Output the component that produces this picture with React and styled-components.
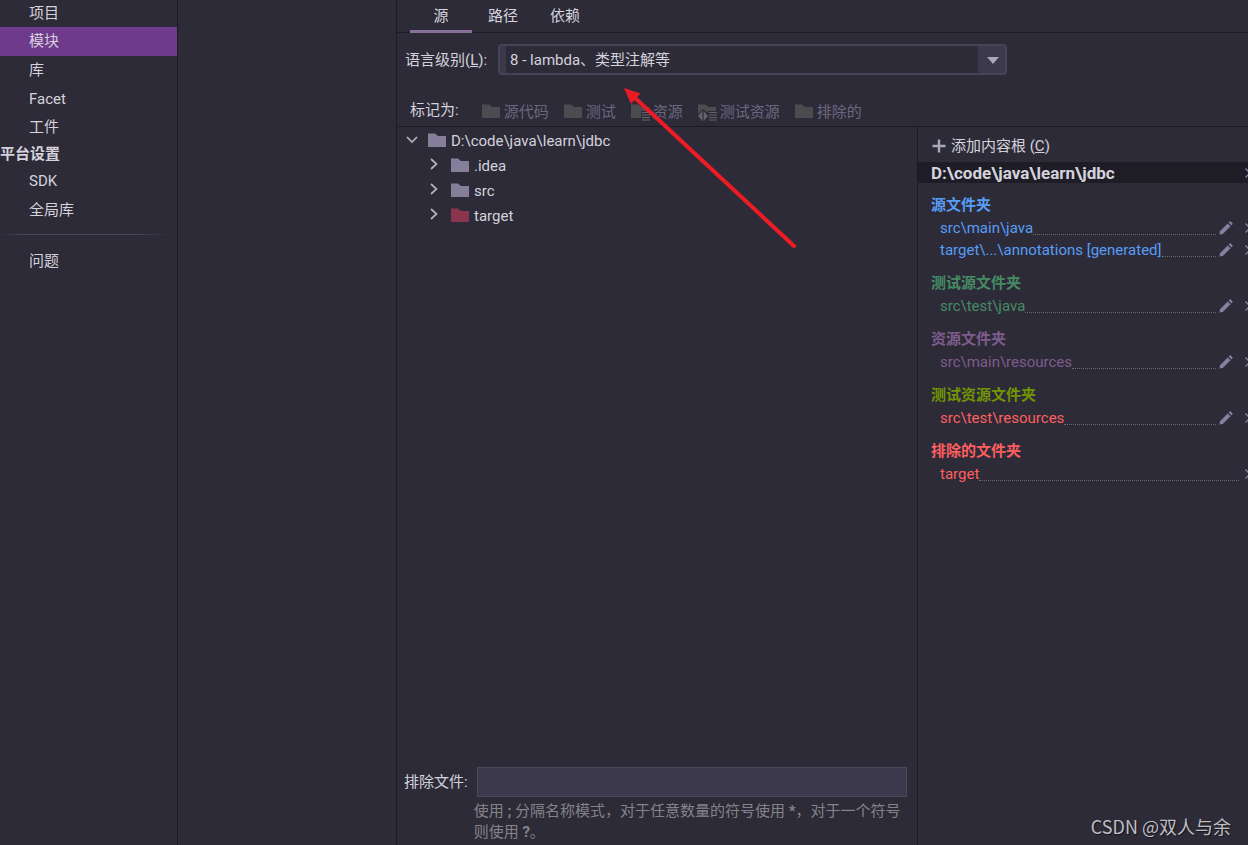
import React from 'react';
import styled, { createGlobalStyle } from 'styled-components';

const GlobalStyle = createGlobalStyle`
    * {
        box-sizing: border-box;
    }

    body {
        margin: 0;
        background: #2d2b38;
        color: #d4d2dc;
        font-family: Roboto, "Noto Sans CJK SC", sans-serif;
        font-size: 15px;
        line-height: 20px;
        overflow: hidden;
    }

    button, input, select {
        font: inherit;
        color: inherit;
    }

    ul {
        margin: 0;
        padding: 0;
        list-style: none;
    }
`
const Window = styled.div`
    display: flex;
    height: 100vh;
    position: relative;
    overflow: hidden;
`
const Sidebar = styled.nav`
    flex: 0 0 178px;
    border-right: 1px solid #1c1a24;
`
const NavItem = styled.button`
    display: block;
    width: 100%;
    height: ${({ short }) => short ? "27px" : "29px"};
    padding: 0 0 1px 29px;
    border: 0;
    text-align: left;
    white-space: nowrap;
    cursor: pointer;
    background: ${({ active }) => active ? "#703a8c" : "transparent"};
`
const NavList = styled.ul`
    li:first-child ${NavItem} {
        height: 27px;
        padding-bottom: 2px;
    }
`
const NavTitle = styled.h2`
    margin: 0;
    font-size: 15px;
    line-height: 26px;
    font-weight: 700;
`
const NavDivider = styled.hr`
    height: 1px;
    margin: 9px 8px 12px 0;
    border: 0;
    background: linear-gradient(to right, #2d2b38, #484658 15%, #484658 82%, #2d2b38);
`
const ModuleList = styled.div`
    flex: 0 0 219px;
    border-right: 1px solid #1c1a24;
`
const Main = styled.main`
    flex: 1;
    min-width: 0;
    display: flex;
    flex-direction: column;
`
const Tabs = styled.div`
    display: flex;
    height: 33px;
    padding-left: 13px;
    border-bottom: 1px solid #1c1a24;
`
const Tab = styled.button`
    width: 62px;
    height: 33px;
    padding: 1px 0 0;
    border: 0;
    border-bottom: 3px solid ${({ active }) => active ? "#877099" : "transparent"};
    background: none;
    cursor: pointer;
`
const LevelRow = styled.div`
    display: flex;
    align-items: center;
    gap: 11px;
    padding: 11px 8px 0;
`
const SelectBox = styled.div`
    position: relative;
    width: 509px;
`
const Select = styled.select`
    display: block;
    width: 100%;
    height: 31px;
    padding: 1px 32px 0 10px;
    border: 2px solid #454358;
    border-radius: 4px;
    appearance: none;
    background: linear-gradient(to right, #3b394b 6px, #2d2b38 6px, #2d2b38 calc(100% - 27px), #3b394b calc(100% - 27px));
`
const Caret = styled.svg`
    position: absolute;
    right: 8px;
    top: 13px;
    pointer-events: none;
`
const MarkRow = styled.div`
    display: flex;
    align-items: center;
    height: 52px;
    padding: 22px 0 0 13px;
    border-bottom: 1px solid #1c1a24;
`
const MarkLabel = styled.span`
    margin-right: 23px;
    padding-bottom: 4px;
`
const MarkButton = styled.button`
    display: flex;
    align-items: center;
    gap: ${({ tight }) => tight ? "2px" : "4px"};
    margin-right: 15px;
    padding: 0;
    border: 0;
    background: none;
    white-space: nowrap;

    &:disabled {
        color: #6b6780;
    }
`
const Content = styled.div`
    flex: 1;
    min-height: 0;
    display: flex;
`
const TreePane = styled.section`
    flex: 1;
    min-width: 0;
    display: flex;
    flex-direction: column;
`
const Tree = styled.ul`
    flex: 1;
    padding: 1px 0 0 8px;
`
const TreeItem = styled.li`
    display: flex;
    align-items: center;
    height: 25px;
    padding-left: ${({ level }) => level ? "22px" : "0"};
`
const Toggle = styled.button`
    display: flex;
    width: 14px;
    margin-right: ${({ level }) => level ? "10px" : "9px"};
    padding: 0 0 3px;
    border: 0;
    background: none;
`
const TreeName = styled.span`
    margin-left: 5px;
`
const ExcludeForm = styled.div`
    display: grid;
    grid-template-columns: max-content 1fr;
    column-gap: 9px;
    align-items: center;
    padding: 0 10px 2px 7px;
`
const ExcludeInput = styled.input`
    width: 100%;
    height: 30px;
    border: 1px solid #4a485c;
    background: #3b394b;
`
const Hint = styled.p`
    grid-column: 2;
    margin: 4px 0 0 -3px;
    color: #85838a;
    line-height: 21px;
`
const RootsPane = styled.aside`
    flex: 0 0 331px;
    min-width: 0;
    border-left: 1px solid #1c1a24;
    overflow: hidden;
`
const AddRoot = styled.button`
    display: flex;
    align-items: center;
    gap: 5px;
    height: 35px;
    padding: 2px 0 0 14px;
    border: 0;
    background: none;
    white-space: nowrap;
`
const RootTitle = styled.div`
    display: flex;
    align-items: center;
    justify-content: space-between;
    height: 21px;
    padding-left: 13px;
    background: #1e1d26;
    font-weight: 700;
    font-size: 17px;
`
const Group = styled.section`
    padding: 10px 0 0 13px;
    color: ${({ color }) => color};
`
const GroupTitle = styled.h3`
    margin: 0;
    font-size: 15px;
    line-height: 24px;
    font-weight: 700;
`
const Folder = styled.li`
    display: flex;
    align-items: center;
    height: 22px;
    padding-left: 9px;
    white-space: nowrap;
    color: ${({ color }) => color};
`
const Dots = styled.span`
    flex: 1;
    height: 13px;
    margin-right: 3px;
    border-bottom: 1px dotted #6d6b70;
`
const IconButton = styled.button`
    display: flex;
    padding: 0;
    border: 0;
    background: none;
`
const RemoveButton = styled(IconButton)`
    flex: 0 0 auto;
    margin: 0 -7px 0 ${({ far }) => far ? "12px" : "3px"};
`
const Watermark = styled.div`
    position: absolute;
    right: 17px;
    bottom: 7px;
    font-family: "Noto Sans CJK SC", sans-serif;
    font-size: 18px;
    line-height: 24px;
    color: #bfbec2;
    text-shadow: 1px 1px 1px #15141b;
`
const Arrow = styled.svg`
    position: absolute;
    left: 620px;
    top: 84px;
    pointer-events: none;
`

const FolderIcon = ({ color = "#857f9b", badge }) => (
    <svg width={badge ? 20 : 18} height="18" viewBox={badge ? "0 0 20 18" : "0 0 18 18"} aria-hidden="true">
        <path d="M0 1.5h7l3 2.5h8v11H0z" fill={color} />
        {badge && <path d="M10 8h10v10H10z" fill="#2d2b38" />}
        {badge && <path d="M11 9.5h8M11 12h8M11 14.5h8M11 17h8" stroke="#66646a" strokeWidth="1.2" />}
        {badge === "test" && (
            <>
                <path d="M0 11l5-5 5 4v8H0z" fill="#2d2b38" />
                <path d="M4.4 8v10L0 13zM5.6 8v10L10 13z" fill="#66646a" />
            </>
        )}
    </svg>
)

const Chevron = ({ open }) => (
    <svg width="14" height="14" viewBox="0 0 14 14" fill="none" stroke="#b5b2bd" strokeWidth="1.7" aria-hidden="true">
        <path d={open ? "M2 5l5 5 5-5" : "M4 2l5.5 5L4 12"} />
    </svg>
)

const Pencil = () => (
    <svg width="14" height="14" viewBox="0 0 14 14" fill="#8580a0" aria-hidden="true">
        <path d="M.5 13.5l.4-3.3 7.8-7.8 2.9 2.9-7.8 7.8zM9.6 1.5l.8-.8q.8-.7 1.6 0l1.3 1.3q.7.8 0 1.6l-.8.8z" />
    </svg>
)

const Cross = () => (
    <svg width="10" height="10" viewBox="0 0 10 10" stroke="#8580a0" strokeWidth="1.4" aria-hidden="true">
        <path d="M.5 .5l9 9M9.5 .5l-9 9" />
    </svg>
)

const projectItems = ["项目", "模块", "库", "Facet", "工件"];
const platformItems = ["SDK", "全局库"];

const marks = [
    { name: "源代码" },
    { name: "测试" },
    { name: "资源", badge: "resource" },
    { name: "测试资源", badge: "test" },
    { name: "排除的" },
];

const tree = [
    { name: "D:\\code\\java\\learn\\jdbc", level: 0 },
    { name: ".idea", level: 1 },
    { name: "src", level: 1 },
    { name: "target", level: 1, color: "#8b344d" },
];

const groups = [
    { title: "源文件夹", color: "#589df6", folders: ["src\\main\\java", "target\\...\\annotations [generated]"] },
    { title: "测试源文件夹", color: "#458c64", folders: ["src\\test\\java"] },
    { title: "资源文件夹", color: "#7d5d8c", folders: ["src\\main\\resources"] },
    { title: "测试资源文件夹", color: "#739503", folderColor: "#ff5f5f", folders: ["src\\test\\resources"] },
    { title: "排除的文件夹", color: "#ff5f5f", folders: ["target"], locked: true },
];

class App extends React.Component {
    state = {
        activeItem: "模块",
        activeTab: "源"
    }

    handleItem = (item) => {
        this.setState({
            activeItem: item
        })
    }

    renderItem = (item) => (
        <li key={item}>
            <NavItem
                short={item === "工件" ? 1 : undefined}
                active={this.state.activeItem === item ? 1 : undefined}
                onClick={() => this.handleItem(item)}
            >
                {item}
            </NavItem>
        </li>
    )

    render() {
        const { activeTab } = this.state;

        return (
            <Window>
                <GlobalStyle />
                <Sidebar>
                    <NavList>{projectItems.map(this.renderItem)}</NavList>
                    <NavTitle>平台设置</NavTitle>
                    <ul>{platformItems.map(this.renderItem)}</ul>
                    <NavDivider />
                    <ul>{this.renderItem("问题")}</ul>
                </Sidebar>
                <ModuleList />
                <Main>
                    <Tabs role="tablist">
                        {["源", "路径", "依赖"].map(tab => (
                            <Tab
                                key={tab}
                                role="tab"
                                aria-selected={activeTab === tab}
                                active={activeTab === tab ? 1 : undefined}
                                onClick={() => this.setState({ activeTab: tab })}
                            >
                                {tab}
                            </Tab>
                        ))}
                    </Tabs>
                    <LevelRow>
                        <label htmlFor="level">语言级别(<u>L</u>):</label>
                        <SelectBox>
                            <Select id="level" defaultValue="8">
                                <option value="8">8 - lambda、类型注解等</option>
                            </Select>
                            <Caret width="12" height="7" viewBox="0 0 12 7"><path d="M0 0h12L6 7z" fill="#aaa7b8" /></Caret>
                        </SelectBox>
                    </LevelRow>
                    <MarkRow>
                        <MarkLabel>标记为:</MarkLabel>
                        {marks.map(mark => (
                            <MarkButton key={mark.name} tight={mark.badge ? 1 : undefined} disabled>
                                <FolderIcon color="#4c4b50" badge={mark.badge} />
                                {mark.name}
                            </MarkButton>
                        ))}
                    </MarkRow>
                    <Content>
                        <TreePane>
                            <Tree>
                                {tree.map(node => (
                                    <TreeItem key={node.name} level={node.level}>
                                        <Toggle level={node.level} aria-label={node.name}><Chevron open={node.level === 0} /></Toggle>
                                        <FolderIcon color={node.color} />
                                        <TreeName>{node.name}</TreeName>
                                    </TreeItem>
                                ))}
                            </Tree>
                            <ExcludeForm>
                                <label htmlFor="exclude">排除文件:</label>
                                <ExcludeInput id="exclude" type="text" />
                                <Hint>使用 <b>;</b> 分隔名称模式，对于任意数量的符号使用 <b>*</b>，对于一个符号则使用 <b>?</b>。</Hint>
                            </ExcludeForm>
                        </TreePane>
                        <RootsPane>
                            <AddRoot>
                                <svg width="14" height="14" viewBox="0 0 14 14" stroke="#aaa7b8" strokeWidth="2.4" aria-hidden="true"><path d="M7 .5v13M.5 7h13" /></svg>
                                <span>添加内容根 (<u>C</u>)</span>
                            </AddRoot>
                            <RootTitle>
                                D:\code\java\learn\jdbc
                                <RemoveButton aria-label="D:\code\java\learn\jdbc"><Cross /></RemoveButton>
                            </RootTitle>
                            {groups.map(group => (
                                <Group key={group.title} color={group.color}>
                                    <GroupTitle>{group.title}</GroupTitle>
                                    <ul>
                                        {group.folders.map(folder => (
                                            <Folder key={folder} color={group.folderColor}>
                                                {folder}
                                                <Dots />
                                                {!group.locked && <IconButton aria-label={folder}><Pencil /></IconButton>}
                                                <RemoveButton far={group.locked ? undefined : 1} aria-label={folder}><Cross /></RemoveButton>
                                            </Folder>
                                        ))}
                                    </ul>
                                </Group>
                            ))}
                        </RootsPane>
                    </Content>
                </Main>
                <Watermark>CSDN @双人与余</Watermark>
                <Arrow width="180" height="168" viewBox="0 0 180 168" aria-hidden="true">
                    <path d="M13 12L174 162" stroke="#ed1c24" strokeWidth="4" strokeLinecap="round" />
                    <path d="M4 4l16.5 5.5L16 14l-5 6z" fill="#ed1c24" />
                </Arrow>
            </Window>
        )
    }
}

export default App;
